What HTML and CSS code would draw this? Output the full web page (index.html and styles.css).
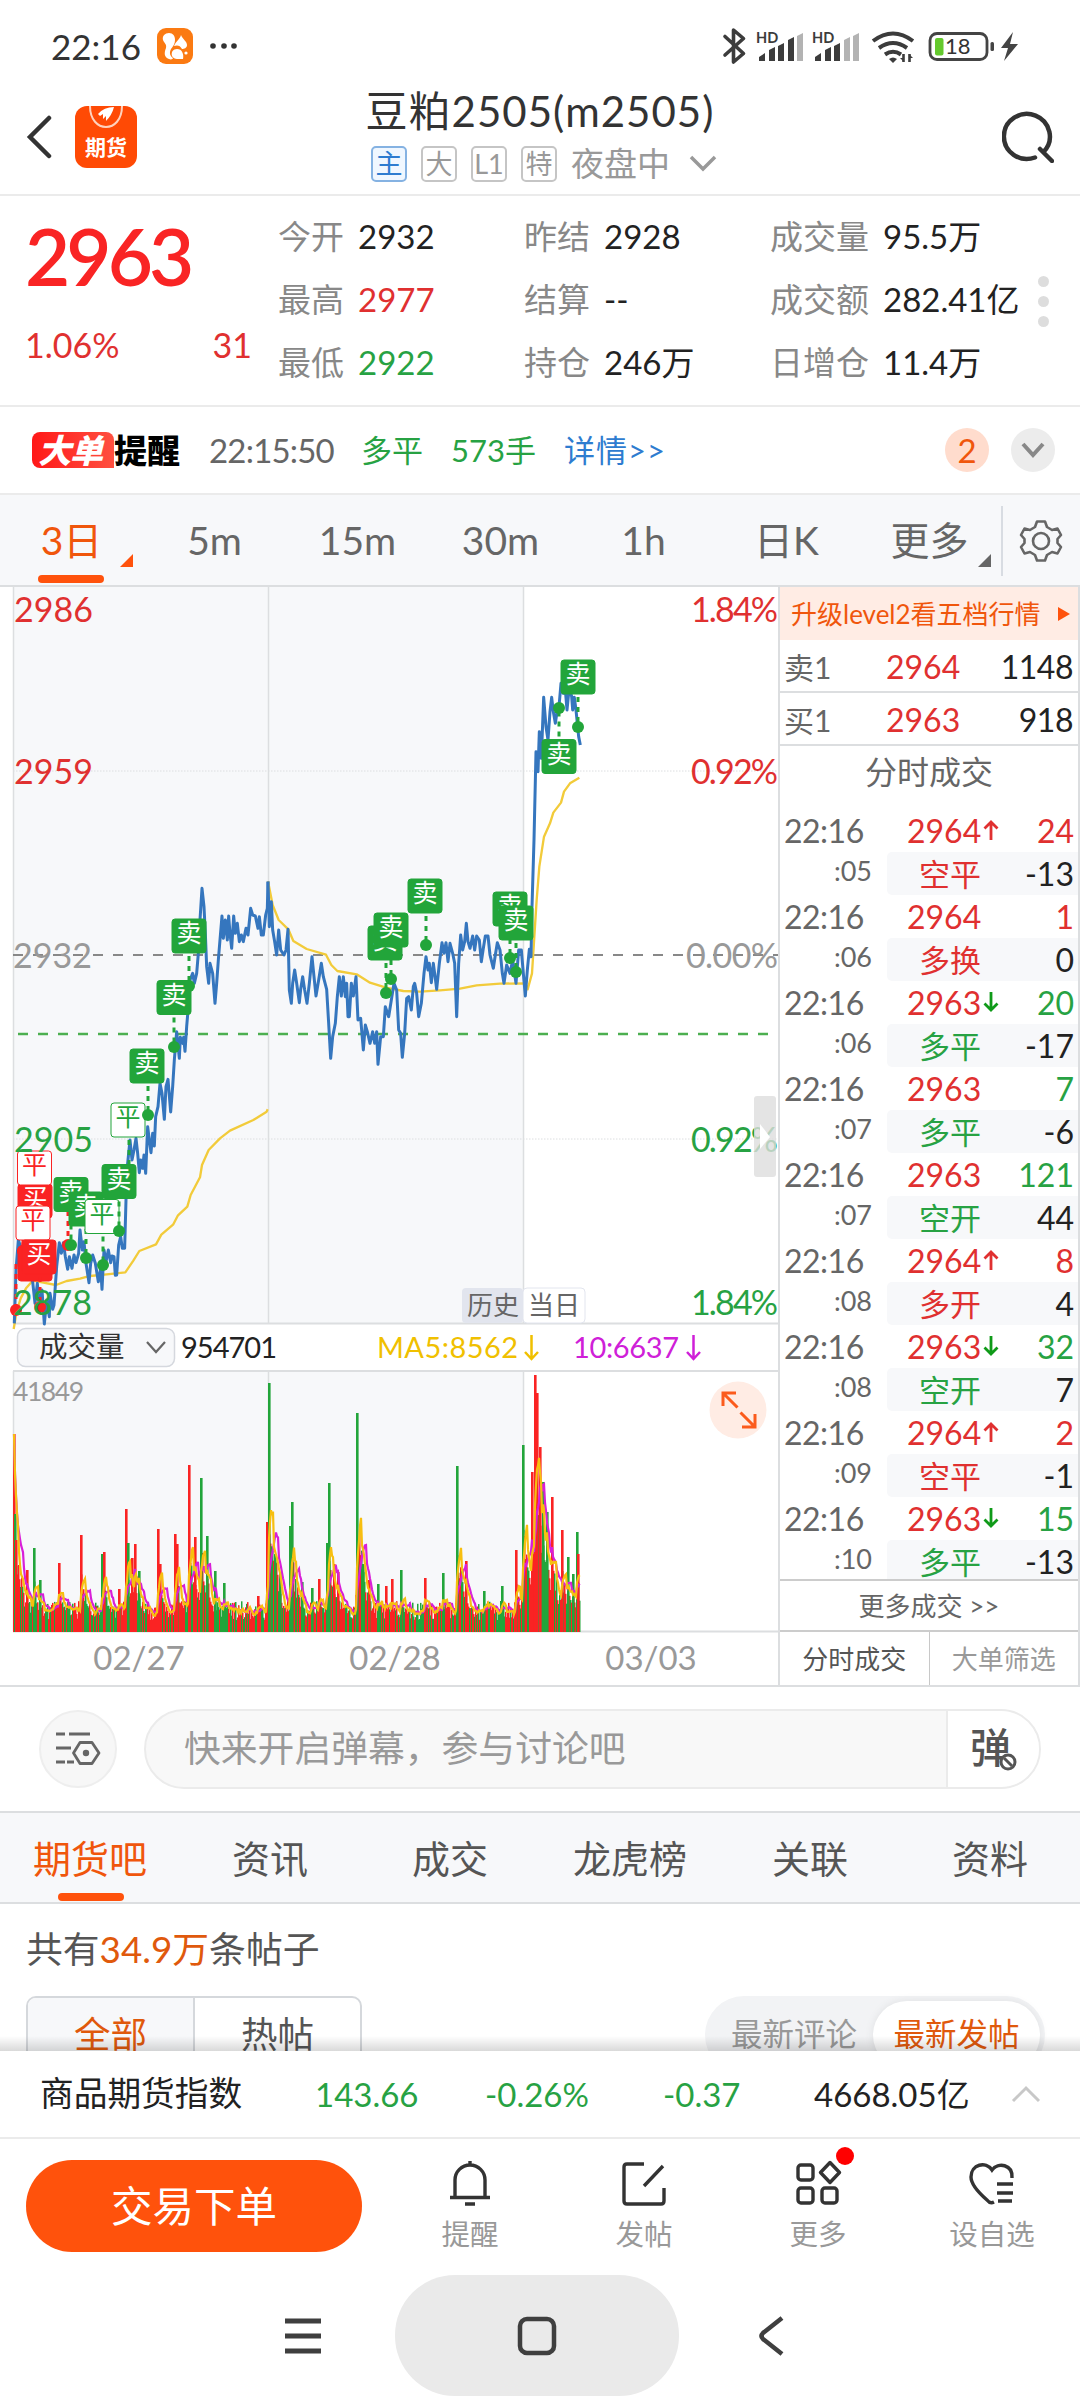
FILE: index.html
```html
<!DOCTYPE html>
<html lang="zh-CN">
<head>
    <meta charset="UTF-8">
    <meta name="viewport" content="width=device-width, initial-scale=1.0">
    <title>豆粕2505(m2505)</title>
    <link rel="stylesheet" href="styles.css">
</head>
<body>
    <div class="status-bar">
        <span class="clock">22:16</span>
        <svg class="app-icon" width="36" height="36" viewBox="0 0 36 36">
            <rect width="36" height="36" rx="9" fill="#fb7a12"/>
            <path d="M12 5c-4 0-7 3-6 7 1 3 4 4 3 8-2 5-2 9 3 11 2 1 4 0 4-1-3-2-4-5-2-9 2-3 4-5 4-9 0-4-2-7-6-7z" fill="#fff"/>
            <path d="M24 7c-1 4-5 6-7 11 3-1 6-1 8 3 2 0 5-1 5-4 0-4-4-5-6-10zM20 21c-4 0-6 3-5 7 1 2 3 3 5 3h6c1-5-1-10-6-10z" fill="#fff"/>
            <circle cx="29" cy="25" r="1.6" fill="#fff"/>
        </svg>
        <svg width="28" height="8" viewBox="0 0 28 8" fill="#333"><circle cx="4" cy="4" r="2.8"/><circle cx="15" cy="4" r="2.8"/><circle cx="25" cy="4" r="2.8"/></svg>
        <svg class="status-icons" width="300" height="40" viewBox="720 26 300 40">
            <path d="M725 36.500l18.500 17L733.500 62V30l10 8.500L725 55" fill="none" stroke="#3c3c3c" stroke-width="3.600" stroke-linejoin="round" stroke-linecap="round"/>
            <text x="756" y="42.500" class="hd">HD</text>
            <g fill="#3c3c3c">
                <path d="M759 61v-4l6-4v8zM769 61V50l6-3v14zM778 61V46l6-3v18zM788 61V40l6-3v24z"/>
                <path d="M797 61V36l6-3v28z" fill="#b3b3b3"/>
            </g>
            <text x="812" y="42.500" class="hd">HD</text>
            <g fill="#3c3c3c">
                <path d="M815 61v-4l6-4v8zM825 61V50l6-3v14zM834 61V46l6-3v18z"/>
                <path d="M844 61V40l6-3v24zM853 61V36l6-3v28z" fill="#b3b3b3"/>
            </g>
            <g fill="none" stroke="#3c3c3c" stroke-width="4">
                <path d="M873 41q20-15 40 0M879 48q14-10 28 0M885 54.500q8-5.500 16 0"/>
                <path d="M903.500 54v8M909.500 62v-8" stroke-width="2.600"/>
            </g>
            <path d="M889 59q4-3 8 0l-4 4zM900 58h4v4zM913 58h-4v-4z" fill="#3c3c3c"/>
            <rect x="930" y="33.500" width="57" height="26" rx="7" fill="none" stroke="#444" stroke-width="2.800"/>
            <rect x="935" y="38" width="8.500" height="17.500" rx="2" fill="#64c92d"/>
            <text x="945" y="54" class="battery">18</text>
            <rect x="990.500" y="42" width="3.500" height="9" rx="1.500" fill="#444"/>
            <path d="M1013 32l-12 16h7l-4 13 14-17h-8z" fill="#444"/>
        </svg>
    </div>

    <header class="header">
        <svg class="back" width="26" height="44" viewBox="0 0 26 44"><path d="M23 3L4 22l19 19" fill="none" stroke="#333" stroke-width="4.500" stroke-linecap="round"/></svg>
        <div class="brand">
            <svg width="40" height="22" viewBox="0 0 40 22"><path d="M4 0c0 28 32 28 32 0" fill="none" stroke="#ffd2bd" stroke-width="2"/><path d="M12 8q6-7 16-7-2 8-8 14v-5l-3 3v-5l-3 2z" fill="#fff"/></svg>
            <span>期货</span>
        </div>
        <div class="title">
            <h1>豆粕2505(m2505)</h1>
            <div class="tags">
                <span class="tag active">主</span>
                <span class="tag">大</span>
                <span class="tag">L1</span>
                <span class="tag">特</span>
                <span class="session">夜盘中</span>
                <svg width="28" height="18" viewBox="0 0 28 18"><path d="M2 2l12 12L26 2" fill="none" stroke="#999" stroke-width="3.500"/></svg>
            </div>
        </div>
        <svg class="search" width="52" height="52" viewBox="0 0 52 52"><path d="M33 46.500A23 22.500 0 1 1 41.500 41M38 38L50 50" fill="none" stroke="#333" stroke-width="4.500" stroke-linecap="round"/></svg>
    </header>

    <section class="quote">
        <div class="last">
            <div class="price">2963</div>
            <div class="change"><span>1.06%</span><span>31</span></div>
        </div>
        <dl>
            <dt>今开</dt><dd>2932</dd><dt>昨结</dt><dd>2928</dd><dt>成交量</dt><dd>95.5万</dd>
            <dt>最高</dt><dd class="up">2977</dd><dt>结算</dt><dd>--</dd><dt>成交额</dt><dd>282.41亿</dd>
            <dt>最低</dt><dd class="down">2922</dd><dt>持仓</dt><dd>246万</dd><dt>日增仓</dt><dd>11.4万</dd>
        </dl>
        <div class="dots"><i></i><i></i><i></i></div>
    </section>

    <section class="alert">
        <div class="alert-logo"><b>大单</b><strong>提醒</strong></div>
        <span class="alert-time">22:15:50</span>
        <span class="down alert-type">多平</span>
        <span class="down alert-qty">573手</span>
        <a class="alert-link">详情&gt;&gt;</a>
        <span class="round count">2</span>
        <span class="round"><svg width="26" height="18" viewBox="0 0 26 18"><path d="M3 3l10 11L23 3" fill="none" stroke="#888" stroke-width="4"/></svg></span>
    </section>

    <nav class="periods">
        <span class="active">3日<i></i></span><span>5m</span><span>15m</span><span>30m</span><span>1h</span><span>日K</span><span>更多<i></i></span>
        <div class="gear"><svg width="44" height="44" viewBox="-22 -22 44 44"><path d="M-4-19.500H4L6-14 11-11 16.500-12.500 20-6 16.500-2V2L20 6 16.500 12.500 11 11 6 14 4 19.500H-4L-6 14-11 11-16.500 12.500-20 6-16.500 2V-2L-20-6-16.500-12.500-11-11-6-14z" fill="none" stroke="#666" stroke-width="2.600" stroke-linejoin="round"/><circle r="8" fill="none" stroke="#666" stroke-width="2.600"/></svg></div>
    </nav>

    <main class="board">
        <svg class="chart" width="778" height="1099" viewBox="0 587 778 1099">
            <rect x="13" y="587" width="510" height="736" fill="#f7f8fa"/>
            <rect x="13" y="1371" width="510" height="261" fill="#f7f8fa"/>
            <g stroke="#dcdee0" stroke-width="1.500">
                <path d="M13.500 587v736M268.500 587v736M523.500 587v736M13.500 1371v260M268.500 1371v260M523.500 1371v260"/>
                <path d="M13 1323.500h765M13 1371h765M13 1631.500h765" stroke-width="2"/>
                <path d="M13 771h765M13 1139h765" stroke-dasharray="1.500 1.500" stroke-width="1"/>
            </g>
            <path d="M13 955h765" stroke="#888" stroke-width="2" stroke-dasharray="10 10"/>
            <path d="M18 1034h755" stroke="#4caf50" stroke-width="2.400" stroke-dasharray="10 10"/>

            <g class="lines">
                <g transform="translate(0 840) scale(.33333)">
                    <polyline class="avg" points="41,1467 50,1415 62,1375 78,1345 98,1322 130,1328 168,1335 200,1323 240,1316 270,1308 320,1303 376,1297 400,1262 418,1233 468,1213 484,1184 520,1153 534,1126 562,1100 572,1065 600,1012 606,975 626,930 660,895 690,872 760,840 800,815 803,808"/>
                    <polyline class="now" points="43,1450 48,1290 55,1200 98,1325 105,1390 112,1330 118,1400 126,1350 133,1452 140,1380 148,1430 150,1360 158,1408 162,1395 170,1280 178,1208 184,1240 190,1208 196,1250 203,1288 208,1250 216,1285 222,1245 228,1268 236,1240 240,1170 247,1230 252,1205 258,1270 267,1328 272,1270 278,1245 286,1270 295,1325 302,1285 306,1348 312,1230 318,1265 325,1230 332,1268 336,1248 342,1250 346,1306 350,1305 356,1215 362,1190 367,1225 374,1225 378,1080 382,980 390,900 396,960 402,930 408,895 413,940 418,998 422,960 428,985 432,945 437,1000 443,860 448,900 453,938 458,880 463,918 467,830 474,800 480,730 486,760 493,838 498,740 504,718 512,816 518,740 523,660 530,575 538,655 541,592 548,610 551,592 555,634 560,560 565,500 570,420 578,400 583,430 590,400 595,340 600,240 606,145 612,200 616,280 620,380 626,430 630,370 638,400 645,490 650,430 655,360 660,300 666,228 670,295 676,240 682,300 686,228 690,280 695,325 701,228 706,280 712,250 718,305 724,285 730,305 738,265 744,285 752,205 758,225 766,228 774,265 778,230 784,285 790,285 797,225 802,205 804,125"/>
                </g>
                <g transform="translate(260 640) scale(.33333)">
                    <polyline class="avg" points="24,724 38,795 56,840 85,868 100,903 140,927 198,944 214,975 232,993 290,1003 330,1028 378,1043 430,1053 480,1055 540,1051 600,1046 650,1036 720,1031 796,1030 803,1048 816,1000 823,890 830,780 838,680 852,590 870,550 880,518 903,488 912,455 930,430 958,413"/>
                    <polyline class="now" points="24,724 28,860 34,785 38,870 44,905 50,945 56,870 62,930 72,945 78,930 84,868 88,1050 94,1090 98,1030 104,990 110,1030 118,1088 122,1048 128,1010 134,1050 141,1090 148,1030 156,950 162,1010 168,1068 176,1020 184,970 190,1010 200,1048 206,1150 212,1255 218,1190 226,1150 232,1070 238,1010 244,1068 250,1010 256,1070 260,1030 264,1130 268,1130 274,1030 280,1068 288,1010 294,1140 302,1135 310,1230 316,1155 322,1175 330,1210 338,1175 344,1210 350,1175 354,1273 362,1190 370,1190 376,1100 386,1130 394,1080 402,1030 410,1050 416,1170 422,1180 427,1252 434,1180 440,1075 446,1070 454,1110 460,1040 464,1030 470,1060 476,1130 484,1090 492,1000 498,950 504,990 508,970 514,1028 520,970 524,1000 530,1048 538,970 546,908 552,940 558,908 564,965 570,910 578,940 584,970 590,1130 596,970 602,885 608,930 614,905 619,850 624,905 630,925 638,888 644,930 650,888 658,900 664,965 670,925 676,888 684,888 690,945 700,985 706,945 712,908 720,930 727,1000 732,1030 740,975 750,1000 758,960 768,1030 776,930 784,930 790,1000 796,1068 802,990 808,928 813,950 816,800 822,600 828,335 834,395 838,275 844,355 851,172 858,260 864,300 870,215 875,172 880,215 886,250 892,210 897,200 903,130 910,160 916,150 921,210 928,140 935,170 938,210 943,172 948,210 952,250 956,290 961,315"/>
                </g>
            </g>

            <g id="signals"></g>

            <g class="axis">
                <text class="up" x="14" y="621.500">2986</text><text class="up" x="691" y="621.500" textLength="87">1.84%</text>
                <text class="up" x="14" y="784">2959</text><text class="up" x="691" y="784" textLength="87">0.92%</text>
                <text x="13" y="968">2932</text><text x="686" y="968" textLength="92">0.00%</text>
                <text class="down" x="14" y="1152">2905</text><text class="down" x="691" y="1152" textLength="87">0.92%</text>
                <text class="down" x="13" y="1315">2878</text><text class="down" x="691" y="1315" textLength="87">1.84%</text>
            </g>
            <rect x="754" y="1096" width="22" height="81" rx="3" fill="#ddd" opacity=".8"/>
            <path d="M760 1124l10 13-10 12z" fill="#fff"/>

            <rect x="462" y="1288" width="61" height="35" rx="4" fill="#e2e5ee"/>
            <rect x="523" y="1288" width="62" height="35" rx="4" fill="#fff" stroke="#e2e5ee"/>
            <g font-size="26" fill="#666"><text x="467" y="1315">历史</text><text x="528" y="1315">当日</text></g>

            <rect x="17.500" y="1328.500" width="157" height="38" rx="8" fill="#f7f8fa" stroke="#d5d8de" stroke-width="1.500"/>
            <text x="39" y="1357" font-size="28.500" fill="#333">成交量</text>
            <path d="M147 1342l9 10 9-10" fill="none" stroke="#666" stroke-width="2.200"/>
            <g font-size="29">
                <text x="181" y="1358" fill="#222" textLength="96">954701</text>
                <text x="377" y="1358" fill="#f0c000" textLength="141">MA5:8562</text>
                <text x="573" y="1358" fill="#cf20d8" textLength="106">10:6637</text>
            </g>
            <path d="M531.500 1335v24M525 1352l6.500 7 6.500-7" fill="none" stroke="#f0c000" stroke-width="2.500"/>
            <path d="M693.500 1335v24M687 1352l6.500 7 6.500-7" fill="none" stroke="#cf20d8" stroke-width="2.500"/>

            <g id="volume"></g>
            <text x="13" y="1401" font-size="26.500" fill="#999" textLength="71">41849</text>
            <circle cx="738" cy="1410" r="28.500" fill="#ffece4"/>
            <path d="M723 1406v-13h13M723.500 1393.500l14 14M755 1414v13h-13M754.500 1426.500l-14-14" fill="none" stroke="#fb5b1c" stroke-width="3"/>
            <g class="dates"><text x="139" y="1670">02/27</text><text x="395" y="1670">02/28</text><text x="651" y="1670">03/03</text></g>
        </svg>

        <aside class="ticks">
            <div class="upgrade"><span>升级level2看五档行情</span><i></i></div>
            <div class="level"><span>卖1</span><b>2964</b><em>1148</em></div>
            <div class="level"><span>买1</span><b>2963</b><em>918</em></div>
            <h2>分时成交</h2>
            <div class="trades" id="trades"></div>
            <div class="more">更多成交 &gt;&gt;</div>
            <div class="tick-tabs"><span class="active">分时成交</span><span>大单筛选</span></div>
        </aside>
    </main>

    <section class="comment">
        <div class="comment-set"><svg width="46" height="36" viewBox="0 0 46 36" fill="none" stroke="#666" stroke-width="2.800"><path d="M1 3h9M14 3h21M1 17h15M1 31h9M12 31h7"/><path d="M25 11.500h12l7 10.500-7 10.500H25L18.500 22z" stroke-linejoin="round"/><circle cx="31" cy="22" r="1.800" fill="#666"/></svg></div>
        <div class="comment-box">
            <span>快来开启弹幕，参与讨论吧</span>
            <div class="danmu">弹<svg width="20" height="20" viewBox="0 0 20 20"><circle cx="10" cy="10" r="7" fill="#fff" stroke="#555" stroke-width="3"/><path d="M6 6l8 8" stroke="#555" stroke-width="3"/></svg></div>
        </div>
    </section>

    <nav class="sections">
        <span class="active">期货吧</span><span>资讯</span><span>成交</span><span>龙虎榜</span><span>关联</span><span>资料</span>
    </nav>

    <section class="posts">
        <p>共有<em>34.9万</em>条帖子</p>
        <div class="filters">
            <div class="kind"><span class="active">全部</span><span>热帖</span></div>
            <div class="sort"><span>最新评论</span><span class="active">最新发帖</span></div>
        </div>
    </section>

    <section class="index-bar">
        <span class="name">商品期货指数</span><span class="down">143.66</span><span class="down">-0.26%</span><span class="down">-0.37</span><span>4668.05亿</span>
        <svg width="32" height="20" viewBox="0 0 32 20"><path d="M3 17L16 4l13 13" fill="none" stroke="#c8c8c8" stroke-width="3"/></svg>
    </section>

    <footer class="actions">
        <button>交易下单</button>
        <div class="action"><svg width="48" height="48" viewBox="0 0 48 48"><path d="M9 38V21a15 15 0 0 1 30 0v17M4 38.500h40M19 45h10M24 2v5" fill="none" stroke="#333" stroke-width="3.400"/></svg>提醒</div>
        <div class="action"><svg width="48" height="48" viewBox="0 0 48 48"><path d="M24 5H7q-3 0-3 3v34q0 3 3 3h34q3 0 3-3V29M43 7L24 27" fill="none" stroke="#333" stroke-width="3.400"/></svg>发帖</div>
        <div class="action"><svg width="48" height="48" viewBox="0 0 48 48"><g fill="none" stroke="#333" stroke-width="3.400"><rect x="4" y="6" width="15" height="15" rx="3"/><rect x="4" y="29" width="15" height="15" rx="3"/><rect x="28" y="29" width="15" height="15" rx="3"/><path d="M36 3.500l9.500 10-9.500 10-9.500-10z" stroke-linejoin="round"/></g></svg>更多<i></i></div>
        <div class="action"><svg width="48" height="48" viewBox="0 0 48 48"><path d="M26 43q-4 2-7-2Q3 27 3 18C3 5 18 2 24 11c6-8 21-6 20 8" fill="none" stroke="#333" stroke-width="3.400"/><path d="M29 25h16M29 34h16M30 42h14" stroke="#333" stroke-width="3.400"/></svg>设自选</div>
    </footer>

    <nav class="system-nav">
        <svg width="36" height="36" viewBox="0 0 36 36"><path d="M0 3h36M0 18h36M0 33h36" stroke="#3f3f3f" stroke-width="5"/></svg>
        <div class="home"><svg width="40" height="40" viewBox="0 0 40 40"><rect x="3" y="3" width="34" height="34" rx="7" fill="none" stroke="#3f3f3f" stroke-width="4.500"/></svg></div>
        <svg width="26" height="40" viewBox="0 0 26 40"><path d="M24 2L5 17q-3 3 0 6l19 15" fill="none" stroke="#3f3f3f" stroke-width="4.500"/></svg>
    </nav>
    <script src="script.js"></script>
</body>
</html>
```

FILE: styles.css
```css
* {
    box-sizing: border-box;
}
body {
    margin: 0;
    width: 1080px;
    height: 2400px;
    overflow: hidden;
    background: #fff;
    color: #333;
    font-family: Lato, "Noto Sans CJK SC", sans-serif;
    font-size: 33px;
    line-height: 1;
}
i, em {
    font-style: normal;
}
h1, h2, p, dl, dd {
    margin: 0;
    font-weight: normal;
}
svg {
    display: block;
    flex: none;
}
span, dt, dd {
    white-space: nowrap;
}
.up { color: #e03030; fill: #e03030; }
.down { color: #27a243; fill: #27a243; }

/* status bar */
.status-bar {
    display: flex;
    align-items: center;
    height: 92px;
    padding: 0 60px 0 51px;
}
.clock {
    width: 106px;
    font-size: 35px;
}
.app-icon {
    margin-right: 16px;
}
.status-icons {
    margin-left: auto;
}
.hd {
    font-size: 14.5px;
    font-weight: bold;
    fill: #3c3c3c;
}
.battery {
    font-size: 22px;
    fill: #333;
}

/* header */
.header {
    display: flex;
    align-items: center;
    height: 104px;
    padding: 0 26px 12px;
    border-bottom: 2px solid #ebebeb;
}
.back {
    margin-right: 23px;
}
.brand {
    display: flex;
    flex-direction: column;
    align-items: center;
    gap: 8px;
    width: 62px;
    height: 62px;
    border-radius: 12px;
    background: #ff4a05;
    color: #fff;
    font-size: 21px;
    font-weight: bold;
}
.title {
    flex: 1;
    padding-right: 59px;
    text-align: center;
}
h1 {
    margin: -4px 0 13px;
    font-size: 42px;
    letter-spacing: 1px;
    line-height: 44px;
}
.tags {
    display: flex;
    justify-content: center;
    align-items: center;
    gap: 14px;
    padding-left: 8px;
    color: #999;
}
.tag {
    width: 36px;
    height: 36px;
    border: 2px solid #c5c5c5;
    border-radius: 5px;
    font-size: 27px;
    line-height: 31px;
}
.tag.active {
    border-color: #85b2e2;
    background: #f0f7ff;
    color: #2e7cd0;
}
.session {
    margin-right: 5px;
}

/* quote */
.quote {
    display: flex;
    height: 211px;
    border-bottom: 2px solid #ebebeb;
}
.last {
    width: 278px;
    padding: 20px 26px 0 25px;
    color: #e03030;
}
.price {
    color: #f92424;
    font-size: 78px;
    font-weight: 600;
    letter-spacing: -3.9px;
    line-height: 80px;
}
.change {
    display: flex;
    justify-content: space-between;
    margin-top: 32px;
    font-size: 34px;
}
dl {
    display: grid;
    grid-template-columns: 80px 166px 80px 166px 113px 150px;
    grid-auto-rows: 63px;
    padding-top: 9px;
    line-height: 63px;
}
dt {
    color: #888;
}
dd {
    color: #222;
}
dd.up { color: #e03030; }
dd.down { color: #27a243; }
.dots {
    display: flex;
    flex-direction: column;
    gap: 9px;
    padding: 80px 0 0 5px;
}
.dots i {
    width: 11px;
    height: 11px;
    border-radius: 50%;
    background: #ddd;
}

/* big order alert */
.alert {
    display: flex;
    align-items: center;
    height: 88px;
    padding-left: 32px;
    border-bottom: 2px solid #ebebeb;
}
.alert-logo {
    display: flex;
    width: 177px;
    color: #000;
    font-size: 33px;
    font-weight: 900;
    letter-spacing: -1px;
    line-height: 36px;
}
.alert-logo b {
    width: 82px;
    padding-left: 6px;
    border-radius: 8px 8px 0 8px;
    background: linear-gradient(90deg, #ff1818, #ff5040);
    color: #fff;
    font-style: italic;
    font-weight: 900;
}
.alert-logo strong { font-weight: 900; letter-spacing: 0; }
.alert-time { width: 152px; color: #666; letter-spacing: -.8px; }
.alert-type { width: 90px; font-size: 31px; }
.alert-qty { width: 113px; font-size: 31px; }
.alert-link { color: #2e7cd0; font-size: 31px; letter-spacing: 1px; }
.round {
    display: flex;
    justify-content: center;
    align-items: center;
    width: 44px;
    height: 44px;
    margin-right: 25px;
    border-radius: 50%;
    background: #ececec;
}
.round.count {
    margin: 0 22px 0 auto;
    background: #ffdccd;
    color: #f0560c;
}

/* period tabs */
.periods {
    display: flex;
    height: 92px;
    border-bottom: 2px solid #dcdee0;
    background: #f7f8fa;
    color: #666;
    font-size: 39px;
    line-height: 91px;
}
.periods span {
    position: relative;
    width: 143px;
    text-align: center;
}
.periods span i {
    position: absolute;
    right: 10px;
    top: 59px;
    border-left: 13px solid transparent;
    border-bottom: 13px solid #666;
}
.periods .active {
    color: #f0560c;
}
.periods .active i {
    border-bottom-color: #ff520c;
}
.periods .active::after,
.sections .active::after {
    content: "";
    position: absolute;
    left: 38px;
    bottom: 2px;
    width: 66px;
    height: 8px;
    border-radius: 4px;
    background: #ff520c;
}
.gear {
    display: flex;
    align-items: center;
    height: 70px;
    margin-top: 11px;
    padding-left: 16px;
    border-left: 2px solid #d8dce2;
}

/* chart */
.board {
    display: flex;
    height: 1100px;
    border-bottom: 2px solid #dcdee0;
}
.lines polyline {
    fill: none;
    stroke-width: 7;
    stroke-linejoin: round;
}
.lines .avg { stroke: #f2cb3a; }
.lines .now { stroke: #3576be; stroke-width: 9; }
.axis {
    font-size: 34px;
    fill: #999;
}
.dates {
    font-size: 33px;
    fill: #999;
    text-anchor: middle;
}
.signal {
    font-size: 25px;
    text-anchor: middle;
}

/* tick list */
.ticks {
    width: 302px;
    border-left: 2px solid #dcdee0;
    border-right: 2px solid #dcdee0;
}
.upgrade {
    display: flex;
    align-items: center;
    justify-content: space-between;
    height: 53px;
    padding: 0 8px 0 11px;
    background: #ffece4;
    color: #f0560c;
    font-size: 26px;
}
.upgrade i {
    border-left: 12px solid #ff520c;
    border-top: 7px solid transparent;
    border-bottom: 7px solid transparent;
}
.level {
    display: flex;
    height: 53px;
    padding: 0 5px 0 4px;
    border-bottom: 2px solid #dcdee0;
    color: #666;
    font-size: 32px;
    line-height: 54px;
}
.level span { width: 102px; font-size: 30px; }
.level b { color: #e03030; font-weight: normal; }
.level em { margin-left: auto; color: #222; letter-spacing: -.5px; }
h2 {
    height: 63px;
    color: #666;
    font-size: 32px;
    line-height: 51px;
    text-align: center;
}
.trades {
    height: 770px;
    overflow: hidden;
}
.trade {
    display: grid;
    grid-template-columns: 107px 1fr;
    grid-template-rows: 43px 43px;
    font-size: 32px;
    line-height: 44px;
    color: #666;
}
.trade time { padding-left: 4px; letter-spacing: -.5px; }
.trade small {
    padding-right: 15px;
    font-size: 27px;
    line-height: 37px;
    text-align: right;
}
.trade div {
    display: flex;
    justify-content: space-between;
    padding: 0 4px 0 20px;
    color: #e03030;
}
.trade .deal {
    padding-left: 32px;
    border-radius: 5px 0 0 5px;
    background: #f7f8fa;
    font-size: 31px;
}
.trade .deal b { font-size: 32px; color: #222; }
.trade b { font-weight: normal; }
.trade .arrow { margin: 11px auto 0 2px; }
.trade .sell { color: #27a243; }
.more {
    height: 51px;
    border-top: 2px solid #ccc;
    color: #666;
    font-size: 26px;
    line-height: 51px;
    text-align: center;
}
.tick-tabs {
    display: flex;
    height: 55px;
    border-top: 2px solid #ccc;
    color: #999;
    font-size: 26px;
    line-height: 55px;
    text-align: center;
}
.tick-tabs span { flex: 1; }
.tick-tabs .active {
    border-right: 1px solid #c8c8c8;
    color: #555;
}

/* comment input */
.comment {
    display: flex;
    align-items: center;
    gap: 27px;
    height: 124px;
    padding: 0 39px 1px 39px;
}
.comment-set {
    display: flex;
    align-items: center;
    justify-content: center;
    width: 78px;
    height: 78px;
    border: 2px solid #eee;
    border-radius: 50%;
    background: #f7f7f7;
}
.comment-box {
    display: flex;
    flex: 1;
    height: 80px;
    overflow: hidden;
    border: 2px solid #ebebeb;
    border-radius: 40px;
    background: #f8f8f8;
    color: #999;
    font-size: 36.8px;
    line-height: 74px;
}
.comment-box span {
    flex: 1;
    padding-left: 38px;
}
.danmu {
    position: relative;
    width: 93px;
    padding-left: 22px;
    border-left: 2px solid #ebebeb;
    background: #fff;
    color: #555;
    font-size: 41px;
    font-weight: 500;
}
.danmu svg {
    position: absolute;
    left: 50px;
    top: 41px;
}

/* section tabs */
.sections {
    display: flex;
    height: 93px;
    border-top: 2px solid #dcdee0;
    border-bottom: 2px solid #dcdee0;
    background: #f7f8fa;
    color: #555;
    font-size: 38px;
    line-height: 90px;
}
.sections span {
    position: relative;
    width: 180px;
    text-align: center;
}
.sections .active { color: #f0560c; }
.sections .active::after { left: 58px; bottom: 1px; }

/* posts */
.posts {
    position: relative;
    height: 147px;
    overflow: hidden;
    padding: 0 35px 0 26px;
    color: #555;
}
.posts::after {
    content: "";
    position: absolute;
    left: 0;
    right: 0;
    bottom: 0;
    height: 15px;
    background: linear-gradient(rgba(0, 0, 0, 0), rgba(0, 0, 0, .15));
}
.posts p {
    height: 92px;
    font-size: 36.8px;
    line-height: 90px;
}
.posts em { color: #e0590c; }
.filters {
    display: flex;
    justify-content: space-between;
}
.kind {
    display: flex;
    width: 336px;
    height: 80px;
    overflow: hidden;
    border: 2px solid #d5d8dc;
    border-radius: 10px;
    font-size: 36.5px;
    line-height: 73px;
    text-align: center;
}
.kind span { flex: 1; }
.kind .active {
    border-right: 2px solid #d5d8dc;
    background: #f7f8fa;
    color: #e0590c;
}
.sort {
    display: flex;
    width: 340px;
    height: 78px;
    padding: 5px;
    border-radius: 39px;
    background: #f2f3f5;
    color: #999;
    font-size: 31.5px;
    line-height: 67px;
}
.sort span { width: 163px; padding-left: 21px; }
.sort .active {
    width: 168px;
    border-radius: 34px;
    background: #fff;
    box-shadow: 0 0 10px rgba(0, 0, 0, .08);
    color: #e0590c;
}

/* index bar */
.index-bar {
    display: grid;
    grid-template-columns: 275px 170px 178px 151px 196px 32px;
    align-items: center;
    height: 88px;
    padding-left: 40px;
    border-bottom: 2px solid #ebebeb;
    background: #fff;
    color: #222;
}
.index-bar .name { font-size: 33.7px; }

/* actions */
.actions {
    display: flex;
    height: 136px;
    padding: 21px 0 0 26px;
}
.actions button {
    width: 336px;
    height: 92px;
    margin-right: 21px;
    padding: 0 0 4px;
    border: 0;
    border-radius: 46px;
    background: #ff520c;
    color: #fff;
    font-family: inherit;
    font-size: 41.5px;
}
.action {
    position: relative;
    display: flex;
    flex-direction: column;
    align-items: center;
    width: 174px;
    color: #999;
    font-size: 28.5px;
}
.action svg { margin: -1px 0 13px; }
.action i {
    position: absolute;
    left: 105px;
    top: -13px;
    width: 18px;
    height: 18px;
    border-radius: 50%;
    background: #f00;
}

/* system navigation */
.system-nav {
    display: flex;
    align-items: center;
    height: 121px;
    padding-left: 285px;
}
.home {
    display: flex;
    align-items: center;
    justify-content: center;
    width: 284px;
    height: 121px;
    margin: 0 79px 0 74px;
    border-radius: 60px;
    background: #eaeaea;
}
```

FILE: script.js
```javascript
const RED = '#fa2323';
const GREEN = '#22a53a';

// trades: second, price, direction, lots, type, position change, side
const trades = [
    ['05', 2964, 'up', 24, '空平', -13, 'buy'],
    ['06', 2964, '', 1, '多换', 0, 'buy'],
    ['06', 2963, 'down', 20, '多平', -17, 'sell'],
    ['07', 2963, '', 7, '多平', -6, 'sell'],
    ['07', 2963, '', 121, '空开', 44, 'sell'],
    ['08', 2964, 'up', 8, '多开', 4, 'buy'],
    ['08', 2963, 'down', 32, '空开', 7, 'sell'],
    ['09', 2964, 'up', 2, '空平', -1, 'buy'],
    ['10', 2963, 'down', 15, '多平', -13, 'sell']
];
const arrows = {
    up: '<svg class="arrow" width="16" height="20" viewBox="0 0 16 20"><path d="M8 20V2M1.500 8.500L8 2l6.500 6.500" fill="none" stroke="#e03030" stroke-width="2.8"/></svg>',
    down: '<svg class="arrow" width="16" height="20" viewBox="0 0 16 20"><path d="M8 0v18M1.500 11.500L8 18l6.500-6.500" fill="none" stroke="#0f9a18" stroke-width="2.8"/></svg>'
};
document.getElementById('trades').innerHTML = trades.map(([sec, price, dir, lots, type, pos, side]) => `
    <div class="trade">
        <time>22:16</time><div><span>${price}</span>${arrows[dir] || ''}<b class="${side}">${lots}</b></div>
        <small>:${sec}</small><div class="deal"><span class="${side}">${type}</span><b>${pos}</b></div>
    </div>`).join('');

// signals: badge x, badge y, text, colour, filled, dot x, dot y
const signals = [
    [18, 1184, '买', RED, 1, 68, 1245],
    [17.5, 1151, '平', RED, 0, 23, 1251],
    [16, 1206, '平', RED, 0, 23, 1251],
    [18, 1247, '', RED, 1, 16, 1310],
    [22, 1240, '买', RED, 1, 40, 1307],
    [54, 1177.5, '卖', GREEN, 1, 71, 1245],
    [69, 1192, '卖', GREEN, 1, 86, 1258],
    [85, 1199.5, '平', GREEN, 0, 103, 1265],
    [111, 1103, '平', GREEN, 0, 129, 1170],
    [102, 1164.5, '卖', GREEN, 1, 119, 1231],
    [130, 1049, '卖', GREEN, 1, 148, 1115],
    [172, 919, '卖', GREEN, 1, 189, 986],
    [157, 980.5, '卖', GREEN, 1, 174, 1047],
    [368, 926, '卖', GREEN, 1, 386, 993],
    [374, 913, '卖', GREEN, 1, 391, 979],
    [408, 879, '卖', GREEN, 1, 426, 945],
    [493, 892, '卖', GREEN, 1, 510, 958],
    [499, 906, '卖', GREEN, 1, 516, 972],
    [542, 739.5, '卖', GREEN, 1, 559, 708],
    [561, 660, '卖', GREEN, 1, 578, 727]
];
document.getElementById('signals').innerHTML = signals.map(([x, y, text, color, filled, dx, dy]) => `
    <path d="M${dx} ${y + 17}V${dy}" stroke="${color}" stroke-width="3" stroke-dasharray="5 5"/>
    <circle cx="${dx}" cy="${dy}" r="6" fill="${color}"/>
    <rect x="${x}" y="${y}" width="34" height="34" rx="3" fill="${filled ? color : '#fff'}" stroke="${color}" stroke-width="1"/>
    <text class="signal" x="${x + 17}" y="${y + 23}" fill="${filled ? '#fff' : color}">${text}</text>`).join('');

// volume: x, height, colour of the tall bars
const peaks = [
    [14, 198, 'r'], [15, 118, 'g'], [16, 92, 'r'], [27, 62, 'r'], [34, 84, 'g'], [40, 52, 'g'], [59, 69, 'r'],
    [68, 30, 'g'], [81, 97, 'r'], [102, 78, 'g'], [104, 80, 'r'], [119, 43, 'r'], [126, 123, 'r'], [128, 89, 'g'],
    [132, 74, 'r'], [135, 88, 'r'], [139, 61, 'g'], [158, 103, 'r'], [160, 68, 'r'], [175, 98, 'r'], [177, 88, 'r'],
    [189, 167, 'r'], [195, 95, 'r'], [201, 154, 'g'], [207, 96, 'g'], [215, 61, 'g'], [224, 49, 'g'], [258, 36, 'r'],
    [267, 110, 'r'], [269, 249, 'g'], [275, 78, 'g'], [280, 60, 'g'], [290, 106, 'g'], [292, 130, 'g'], [302, 50, 'g'],
    [312, 44, 'g'], [319, 53, 'r'], [327, 89, 'g'], [329, 149, 'g'], [334, 68, 'r'], [338, 60, 'r'], [357, 219, 'g'],
    [363, 68, 'g'], [369, 52, 'r'], [378, 48, 'g'], [386, 46, 'r'], [392, 53, 'r'], [401, 62, 'g'], [425, 54, 'r'],
    [443, 59, 'g'], [457, 166, 'g'], [466, 71, 'r'], [484, 41, 'g'], [502, 46, 'g'], [516, 82, 'r'], [523, 187, 'g'],
    [532, 160, 'r'], [535, 257, 'r'], [537, 239, 'r'], [540, 185, 'r'], [543, 150, 'g'], [547, 120, 'g'], [552, 135, 'r'],
    [562, 102, 'r'], [568, 75, 'g'], [573, 58, 'g'], [577, 100, 'g'], [578, 78, 'r']
];
let seed = 7;
function random() {
    seed = (seed * 16807) % 2147483647;
    return seed / 2147483647;
}
const base = 1632;
const start = 14;
const bars = [];
for (let x = start; x <= 580; x++) {
    let h = 12 + random() * 19;
    for (const [px, ph] of peaks) {
        const d = x - px;
        const near = d >= 0 ? ph * .62 * Math.exp(-d / 9) : ph * .35 * Math.exp(d / 2);
        h = Math.max(h, near * (.7 + random() * .4));
    }
    bars.push({ x, h, color: random() < .55 ? RED : GREEN });
}
for (const [px, ph, c] of peaks) {
    const bar = bars[px - start];
    bar.h = ph;
    bar.color = c === 'r' ? RED : GREEN;
    bar.peak = true;
}
function average(n) {
    return bars.map((bar, i) => {
        const part = bars.slice(Math.max(0, i - n + 1), i + 1);
        const sum = part.reduce((s, b) => s + b.h, 0);
        return `${bar.x},${(base - sum / part.length).toFixed(1)}`;
    }).join(' ');
}
const drawn = bars.filter(b => !b.peak).concat(bars.filter(b => b.peak));
document.getElementById('volume').innerHTML =
    drawn.map(b => `<rect x="${b.x - 1}" y="${(base - b.h).toFixed(1)}" width="${b.peak ? 2.6 : 1.5}" height="${b.h.toFixed(1)}" fill="${b.color}"/>`).join('') +
    `<polyline points="${average(10)}" fill="none" stroke="#d81fd8" stroke-width="2.2"/>` +
    `<polyline points="${average(5)}" fill="none" stroke="#f7bf10" stroke-width="2.2"/>`;
```
